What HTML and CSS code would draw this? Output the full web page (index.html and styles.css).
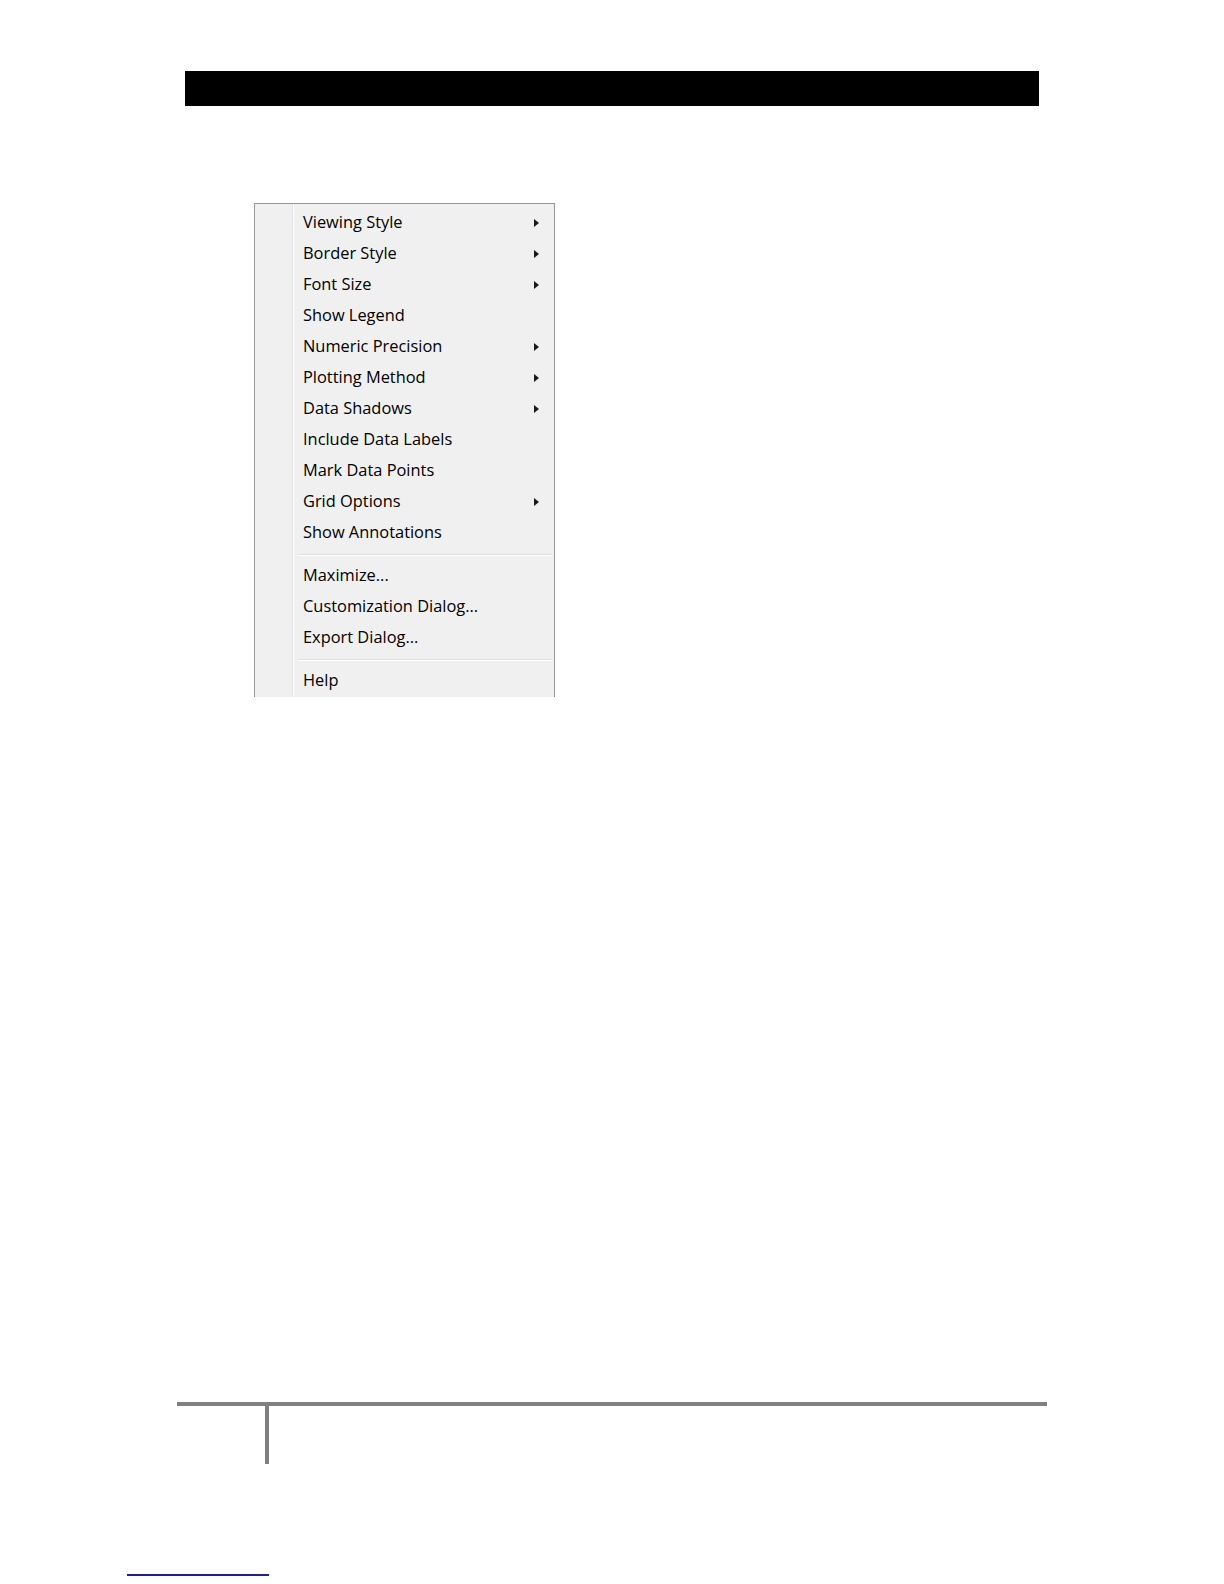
FILE: index.html
```html
<!DOCTYPE html>
<html lang="en">
<head>
  <meta charset="UTF-8">
  <meta name="viewport" content="width=device-width, initial-scale=1.0">
  <title>Chart Context Menu</title>
  <link rel="stylesheet" href="styles.css">
</head>
<body>
  <div class="page">
    <div class="top-bar"></div>

    <div class="menu">
      <div class="item">Viewing Style <span class="arrow"></span></div>
      <div class="item">Border Style <span class="arrow"></span></div>
      <div class="item">Font Size <span class="arrow"></span></div>
      <div class="item">Show Legend</div>
      <div class="item">Numeric Precision <span class="arrow"></span></div>
      <div class="item">Plotting Method <span class="arrow"></span></div>
      <div class="item">Data Shadows <span class="arrow"></span></div>
      <div class="item">Include Data Labels</div>
      <div class="item">Mark Data Points</div>
      <div class="item">Grid Options <span class="arrow"></span></div>
      <div class="item">Show Annotations</div>
      <div class="separator"></div>
      <div class="item">Maximize...</div>
      <div class="item">Customization Dialog...</div>
      <div class="item">Export Dialog...</div>
      <div class="separator"></div>
      <div class="item">Help</div>
    </div>

    <div class="footer-rule"></div>
    <div class="footer-stem"></div>
    <div class="footnote-line"></div>
  </div>
</body>
</html>
```

FILE: styles.css
```css
body {
  margin: 0;
  background-color: #fff;
  font-family: "Open Sans", "Noto Sans", sans-serif;
}
.page {
  height: 1584px;
  overflow: hidden;
}
.top-bar {
  margin: 71px 0 0 185px;
  width: 854px;
  height: 35px;
  background-color: #000;
}
.menu {
  margin: 97px 0 0 254px;
  width: 299px;
  padding: 2px 0;
  border: 1px solid #979797;
  border-bottom: none;
  background:
    linear-gradient(to right, transparent 37px, #e2e3e3 37px, #e2e3e3 38px, #fff 38px, #fff 39px, transparent 39px),
    #f0f0f0;
}
.item {
  box-sizing: border-box;
  display: flex;
  align-items: center;
  justify-content: space-between;
  height: 31px;
  padding: 2px 15px 0 48px;
  font-size: 16.4px;
  line-height: 1;
  color: #000;
}
.arrow {
  width: 0;
  height: 0;
  border-left: 5px solid #1a1a1a;
  border-top: 4.5px solid transparent;
  border-bottom: 4.5px solid transparent;
}
.separator {
  height: 12px;
  margin: 0 2px 0 43px;
  background: linear-gradient(to bottom, transparent 7px, #e0e0e0 7px, #e0e0e0 8px, #fff 8px, #fff 9px, transparent 9px);
}
.footer-rule {
  margin: 705px 0 0 177px;
  width: 870px;
  height: 4px;
  background-color: #808080;
}
.footer-stem {
  margin-left: 265px;
  width: 4px;
  height: 58px;
  background-color: #808080;
}
.footnote-line {
  margin: 110px 0 0 127px;
  width: 142px;
  height: 2px;
  background-color: #1f1f9a;
}
```
